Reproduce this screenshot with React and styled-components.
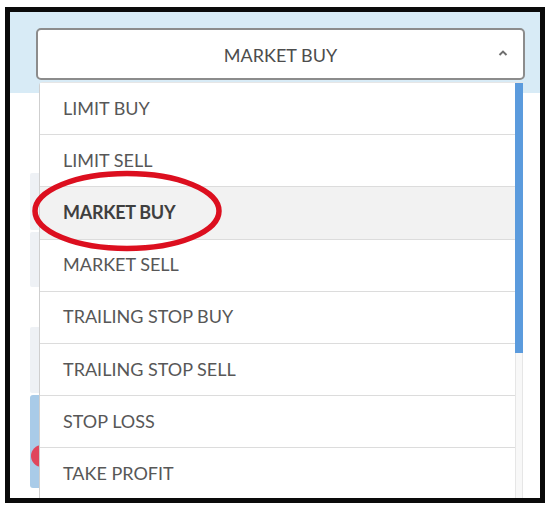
import React from 'react';
import styled, { createGlobalStyle } from 'styled-components';

const GlobalStyle = createGlobalStyle`
    body {
        margin: 0;
        background: #ffffff;
        font-family: 'Lato', 'Open Sans', sans-serif;
    }
`;

const options = [
    'LIMIT BUY',
    'LIMIT SELL',
    'MARKET BUY',
    'MARKET SELL',
    'TRAILING STOP BUY',
    'TRAILING STOP SELL',
    'STOP LOSS',
    'TAKE PROFIT',
];

const App = () => {
    const selected = 'MARKET BUY';

    return (
        <>
            <GlobalStyle />
            <Page>
                <Frame>
                    <Header>
                        <SelectBox>
                            <SelectLabel>{selected}</SelectLabel>
                            <Caret viewBox="0 0 10 6">
                                <path d="M1.5 5 L5 1.6 L8.5 5" />
                            </Caret>
                        </SelectBox>
                    </Header>
                    <Body>
                        <SideStrip>
                            <StripBlock $h={57} $mt={80} />
                            <StripBlock $h={55} $mt={2} />
                            <StripBlock $h={66} $mt={40} />
                            <BlueBar $mt={2}>
                                <RedDot />
                            </BlueBar>
                        </SideStrip>
                    </Body>

                    <Menu>
                        <List>
                            {options.map(opt => (
                                <Option key={opt} $active={opt === selected}>
                                    {opt}
                                </Option>
                            ))}
                        </List>
                        <Scrollbar>
                            <Thumb />
                        </Scrollbar>
                    </Menu>

                    <Circle viewBox="0 0 200 84">
                        <ellipse cx="100" cy="42" rx="92" ry="37.5" />
                    </Circle>
                </Frame>
            </Page>
        </>
    );
};

const Page = styled.div`
    padding: 7px 0 0 5px;
`;

const Frame = styled.div`
    position: relative;
    width: 540px;
    height: 496px;
    box-sizing: border-box;
    border: 5px solid #0a0a0a;
    background: #ffffff;
    overflow: hidden;
    display: flex;
    flex-direction: column;
`;

const Header = styled.div`
    height: 81px;
    background: #d8ebf6;
    padding: 16px 0 0 26px;
    box-sizing: border-box;
`;

const SelectBox = styled.div`
    position: relative;
    width: 489px;
    height: 52px;
    box-sizing: border-box;
    border: 2px solid #8c8c8c;
    border-radius: 5px;
    background: #ffffff;
    display: flex;
    align-items: center;
    justify-content: center;
`;

const SelectLabel = styled.span`
    font-size: 18px;
    color: #4d4d4d;
    margin-top: 1px;
`;

const Caret = styled.svg`
    position: absolute;
    right: 15px;
    top: 20px;
    width: 10px;
    height: 6px;
    fill: none;
    stroke: #6f6f6f;
    stroke-width: 2;
`;

const Body = styled.div`
    flex: 1;
    padding-left: 20px;
`;

const SideStrip = styled.div`
    width: 9px;
    display: flex;
    flex-direction: column;
`;

const StripBlock = styled.div`
    height: ${p => p.$h}px;
    margin-top: ${p => p.$mt}px;
    background: #eef1f5;
    border-radius: 2px 0 0 2px;
`;

const BlueBar = styled.div`
    position: relative;
    height: 93px;
    margin-top: ${p => p.$mt}px;
    background: #a9cbe8;
    border-radius: 3px 0 0 3px;
`;

const RedDot = styled.div`
    position: absolute;
    left: 1px;
    top: 50px;
    width: 22px;
    height: 22px;
    border-radius: 50%;
    background: #e0465c;
`;

const Menu = styled.div`
    position: absolute;
    left: 29px;
    top: 70px;
    bottom: 0;
    width: 484px;
    display: flex;
    background: #ffffff;
    border-left: 1px solid #cfcfcf;
    border-top: 1px solid #e6e6e6;
    border-radius: 4px 0 0 0;
    box-sizing: border-box;
`;

const List = styled.div`
    flex: 1;
    display: flex;
    flex-direction: column;
`;

const Option = styled.div`
    flex: none;
    height: 52.2px;
    box-sizing: border-box;
    border-bottom: 1.5px solid #dcdcdc;
    display: flex;
    align-items: center;
    padding: 0 0 2px 23px;
    font-size: 18px;
    color: ${p => (p.$active ? '#3f3f3f' : '#575757')};
    font-weight: ${p => (p.$active ? 700 : 400)};
    letter-spacing: ${p => (p.$active ? '-0.3px' : '0')};
    background: ${p => (p.$active ? '#f2f2f2' : '#ffffff')};
`;

const Scrollbar = styled.div`
    width: 8px;
    background: #f8f8f8;
    border-left: 1px solid #e6e6e6;
    border-right: 1px solid #e6e6e6;
    box-sizing: border-box;
`;

const Thumb = styled.div`
    height: 270px;
    margin: 0 -1px;
    background: #5b9bdd;
`;

const Circle = styled.svg`
    position: absolute;
    left: 17px;
    top: 157px;
    width: 200px;
    height: 84px;
    fill: none;
    stroke: #dc0f1f;
    stroke-width: 5.5;
`;

export default App;
